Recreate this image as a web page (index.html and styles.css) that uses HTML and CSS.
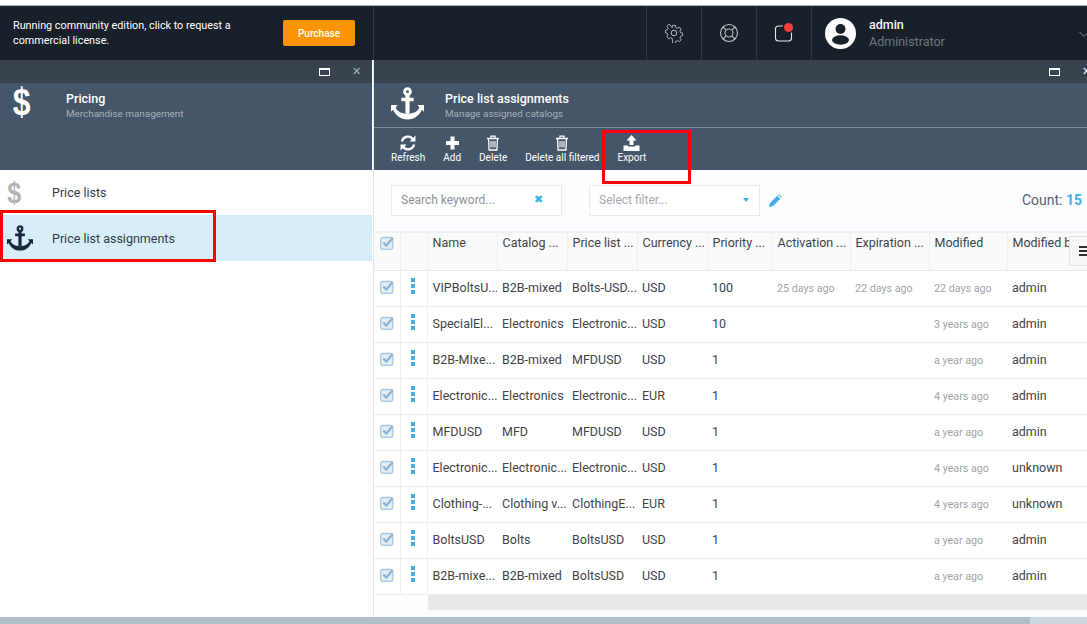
FILE: index.html
```html
<!DOCTYPE html>
<html lang="en">
<head>
    <meta charset="UTF-8">
    <title>Price list assignments</title>
    <link rel="stylesheet" href="styles.css">
</head>
<body>
    <svg class="sprites" width="0" height="0">
        <symbol id="anchor" viewBox="0 0 32 32">
            <circle cx="16" cy="4.5" r="2.8" fill="none" stroke="currentColor" stroke-width="2.8"/>
            <path d="M14 7.5h4v18.5h-4zM10 10.500h12v3.400H10z" fill="currentColor"/>
            <path d="M0 17.5l6.5 0-2 2.2C6 24 10.500 26 16 26s10-2 11.500-6.300l-2-2.200 6.500 0V24l-2-2C27.500 27.500 22.500 31.500 16 31.500S4.500 27.500 2 22l-2 2z" fill="currentColor"/>
        </symbol>
        <symbol id="trash" viewBox="0 0 14 16">
            <path d="M1 3.500h12M5 3V1.200h4V3M2.500 3.500l.6 11.500h7.800l.6-11.500" fill="none" stroke="currentColor" stroke-width="1.300"/>
            <path d="M5 6v6.500M7 6v6.500M9 6v6.500" stroke="currentColor" stroke-width="1.100"/>
        </symbol>
        <symbol id="checked" viewBox="0 0 14 14">
            <rect x=".7" y="1.500" width="12" height="11.800" rx="2" fill="#e3edf4" stroke="#a9c8dd" stroke-width="1.300"/>
            <path d="M3.300 6.500l3 3 6.500-7.500" fill="none" stroke="#8db6d2" stroke-width="2.300"/>
        </symbol>
        <symbol id="dots" viewBox="0 0 4 16">
            <path d="M0 0h4v4H0zM0 6h4v4H0zM0 12h4v4H0z" fill="#41afe6"/>
        </symbol>
    </svg>

    <header class="topbar">
        <div class="notice">
            <p>Running community edition, click to request a commercial license.</p>
            <button class="purchase">Purchase</button>
        </div>
        <div class="top-spacer"></div>
        <div class="top-btn">
            <svg width="20" height="20" viewBox="0 0 20 20" fill="none" stroke="#b9c0c8" stroke-width="1">
                <circle cx="10" cy="10" r="2.800"/>
                <path d="M8.500 1.500h3l.5 2.500 1.700.8 2.200-1.300 2 2.200-1.300 2.100.6 1.700 2.300.6v3l-2.300.6-.6 1.700 1.300 2.100-2 2.200-2.200-1.300-1.700.8-.5 2.400h-3L8 16l-1.700-.8L4.100 16.500l-2-2.200 1.300-2.100-.6-1.700-2.300-.6v-3l2.300-.6.600-1.700-1.300-2.100 2-2.200 2.200 1.300L8 4z" transform="translate(1 1) scale(.9)"/>
            </svg>
        </div>
        <div class="top-btn">
            <svg width="20" height="20" viewBox="0 0 20 20" fill="none" stroke="#b9c0c8" stroke-width="1.100">
                <circle cx="10" cy="10" r="8.500"/>
                <circle cx="10" cy="10" r="4"/>
                <path d="M4 4l3.200 3.200M16 4l-3.200 3.200M4 16l3.200-3.200M16 16l-3.200-3.200"/>
            </svg>
        </div>
        <div class="top-btn bell">
            <svg width="20" height="20" viewBox="0 0 20 20" fill="none" stroke="#e4e7ea" stroke-width="1.100">
                <rect x="1.500" y="3" width="16" height="15" rx="3"/>
            </svg>
            <span class="dot"></span>
        </div>
        <div class="user">
            <svg class="avatar" width="31" height="31" viewBox="0 0 31 31">
                <circle cx="15.500" cy="15.500" r="15.500" fill="#fff"/>
                <circle cx="15.500" cy="11" r="5" fill="#18202a"/>
                <ellipse cx="15.500" cy="22" rx="8.500" ry="4.700" fill="#18202a"/>
            </svg>
            <div class="user-text">
                <div class="user-name">admin</div>
                <div class="user-role">Administrator</div>
            </div>
            <svg class="chevron" width="10" height="6" viewBox="0 0 10 6" fill="none" stroke="#7d8792"><path d="M0 .5l5 5 5-5"/></svg>
        </div>
    </header>

    <main class="blades">
        <section class="blade blade-left">
            <div class="blade-bar">
                <span class="win-max"></span>
                <span class="win-close">✕</span>
            </div>
            <div class="blade-head head-tall">
                <span class="dollar"><span>$</span></span>
                <div>
                    <div class="blade-title">Pricing</div>
                    <div class="blade-sub">Merchandise management</div>
                </div>
            </div>
            <ul class="menu">
                <li class="menu-item">
                    <span class="menu-icon dollar-gray"><span>$</span></span>
                    Price lists
                </li>
                <li class="menu-item selected">
                    <svg class="menu-icon anchor-dark" width="26" height="26"><use href="#anchor"/></svg>
                    Price list assignments
                </li>
            </ul>
            <div class="mark mark-menu"></div>
        </section>

        <section class="blade blade-right">
            <div class="blade-bar">
                <span class="win-max"></span>
                <span class="win-close">✕</span>
            </div>
            <div class="blade-head">
                <svg class="head-anchor" width="33" height="33"><use href="#anchor"/></svg>
                <div>
                    <div class="blade-title">Price list assignments</div>
                    <div class="blade-sub">Manage assigned catalogs</div>
                </div>
            </div>
            <div class="toolbar">
                <div class="tool">
                    <svg width="16" height="16" viewBox="0 0 16 16" fill="none" stroke="#fff" stroke-width="2.400">
                        <path d="M2 6.500A6 6 0 0 1 13 4.500M14 9.500A6 6 0 0 1 3 11.500"/>
                        <path d="M15.500 .500v6h-6zM.5 15.500v-6h6z" fill="#fff" stroke="none"/>
                    </svg>
                    Refresh
                </div>
                <div class="tool">
                    <svg width="15" height="16" viewBox="0 0 15 15"><path d="M5.500 1h4v4.500H14v4H9.500V14h-4V9.500H1v-4h4.500z" fill="#fff"/></svg>
                    Add
                </div>
                <div class="tool">
                    <svg width="14" height="16"><use href="#trash"/></svg>
                    Delete
                </div>
                <div class="tool">
                    <svg width="14" height="16"><use href="#trash"/></svg>
                    Delete all filtered
                </div>
                <div class="tool">
                    <svg width="17" height="16" viewBox="0 0 17 16"><path d="M8.500 0l5 5.500h-3V10h-4V5.500h-3zM.5 10.500h4.500v1h7v-1h4.500V16H.5z" fill="#fff"/></svg>
                    Export
                </div>
                <div class="mark mark-export"></div>
            </div>

            <div class="filters">
                <div class="search">
                    <span>Search keyword...</span>
                    <span class="search-clear">✖</span>
                </div>
                <div class="select">
                    <span>Select filter...</span>
                    <span class="caret"></span>
                </div>
                <svg class="pencil" width="13" height="13" viewBox="0 0 13 13"><path d="M0 13l.8-3.800 7.500-7.500 3 3-7.500 7.500zM9.200.8L10 0l3 3-.8.800z" fill="#41afe6"/></svg>
                <div class="count">Count: <b>15</b></div>
            </div>

            <div class="grid-wrap">
                <table class="grid">
                    <colgroup>
                        <col class="c-check"><col class="c-dots"><col class="c-name"><col class="c-cat"><col class="c-list"><col class="c-cur"><col class="c-pri"><col class="c-act"><col class="c-exp"><col class="c-mod"><col class="c-by">
                    </colgroup>
                    <thead>
                        <tr>
                            <th class="cell-check"><svg width="14" height="14"><use href="#checked"/></svg></th>
                            <th></th>
                            <th>Name</th><th>Catalog ...</th><th>Price list ...</th><th>Currency ...</th><th>Priority ...</th><th>Activation ...</th><th>Expiration ...</th><th>Modified</th><th>Modified b</th>
                        </tr>
                    </thead>
                    <tbody id="rows"></tbody>
                </table>
                <div class="scroll-row"><div class="scroll-track"></div></div>
                <div class="grid-menu"><span></span></div>
            </div>
        </section>
    </main>
    <footer class="bottom-scroll"><div class="bottom-end"></div></footer>

    <script>
        const rows = [
            ['VIPBoltsU...', 'B2B-mixed', 'Bolts-USD...', 'USD', '100', '25 days ago', '22 days ago', '22 days ago', 'admin'],
            ['SpecialEl...', 'Electronics', 'Electronic...', 'USD', '10', '', '', '3 years ago', 'admin'],
            ['B2B-MIxe...', 'B2B-mixed', 'MFDUSD', 'USD', '1', '', '', 'a year ago', 'admin'],
            ['Electronic...', 'Electronics', 'Electronic...', 'EUR', '1', '', '', '4 years ago', 'admin'],
            ['MFDUSD', 'MFD', 'MFDUSD', 'USD', '1', '', '', 'a year ago', 'admin'],
            ['Electronic...', 'Electronic...', 'Electronic...', 'USD', '1', '', '', '4 years ago', 'unknown'],
            ['Clothing-...', 'Clothing v...', 'ClothingE...', 'EUR', '1', '', '', '4 years ago', 'unknown'],
            ['BoltsUSD', 'Bolts', 'BoltsUSD', 'USD', '1', '', '', 'a year ago', 'admin'],
            ['B2B-mixe...', 'B2B-mixed', 'BoltsUSD', 'USD', '1', '', '', 'a year ago', 'admin']
        ];

        document.getElementById('rows').innerHTML = rows.map(r => `
            <tr>
                <td class="cell-check"><svg width="14" height="14"><use href="#checked"/></svg></td>
                <td class="cell-dots"><svg width="4" height="16"><use href="#dots"/></svg></td>
                ${r.map((v, i) => `<td class="${i >= 5 && i <= 7 ? 'date' : ''}">${v}</td>`).join('')}
            </tr>
        `).join('');
    </script>
</body>
</html>
```

FILE: styles.css
```css
* {
    box-sizing: border-box;
}
html, body {
    height: 100%;
}
body {
    margin: 0;
    padding-top: 5px;
    font-family: Roboto, "Liberation Sans", sans-serif;
    background: #fff;
    color: #333;
    overflow: hidden;
    display: flex;
    flex-direction: column;
}
.sprites {
    position: absolute;
}

/* top bar */
.topbar {
    height: 55px;
    flex: none;
    display: flex;
    background: #18202a;
    border-top: 1px solid #b4b8bc;
}
.notice {
    width: 374px;
    flex: none;
    display: flex;
    align-items: center;
    justify-content: space-between;
    padding: 0 18px 0 13px;
    border-right: 1px solid #2d3947;
    color: #fff;
    font-size: 10.800px;
    line-height: 15px;
}
.notice p {
    margin: 0;
    width: 230px;
}
.purchase {
    width: 72px;
    height: 26px;
    border: none;
    border-radius: 2px;
    background: #fb9404;
    color: #fff;
    font-family: inherit;
    font-size: 10px;
    font-weight: 500;
}
.top-spacer {
    width: 272px;
    flex: none;
}
.top-btn {
    width: 55px;
    flex: none;
    position: relative;
    display: flex;
    align-items: center;
    justify-content: center;
    border-left: 1px solid #2d3947;
}
.bell .dot {
    position: absolute;
    top: 17px;
    left: 27px;
    width: 9px;
    height: 9px;
    border-radius: 50%;
    background: #f63e3e;
    box-shadow: 0 0 0 1.500px #18202a;
}
.user {
    flex: 1;
    display: flex;
    align-items: center;
    padding-left: 13px;
    border-left: 1px solid #2d3947;
    position: relative;
}
.user-text {
    margin-left: 13px;
}
.user-name {
    color: #f4f5f6;
    font-size: 12.500px;
    font-weight: 500;
    line-height: 17px;
}
.user-role {
    color: #6f7882;
    font-size: 12.500px;
    line-height: 17px;
}
.chevron {
    position: absolute;
    right: -2px;
    top: 25px;
}

/* blades */
.blades {
    flex: 1;
    display: flex;
    min-height: 0;
}
.blade {
    position: relative;
    display: flex;
    flex-direction: column;
    background: #fff;
}
.blade-left {
    width: 372px;
    flex: none;
}
.blade-right {
    flex: 1;
    min-width: 0;
    margin-left: 1px;
    border-left: 1px solid #e3e8ee;
    background: #fcfdfe;
}
.blade-bar {
    height: 23px;
    flex: none;
    display: flex;
    align-items: center;
    justify-content: flex-end;
    background: #38434f;
    color: #aeb5bc;
    padding-right: 11px;
}
.blade-right .blade-bar {
    padding-right: 0;
    margin-right: -4px;
}
.win-max {
    width: 11px;
    height: 8px;
    border: 1px solid #fff;
    border-top-width: 2px;
    margin-right: 22px;
}
.win-close {
    font-size: 11px;
    line-height: 11px;
}
.blade-right .win-close {
    color: #fff;
}
.blade-head {
    height: 44px;
    flex: none;
    display: flex;
    background: #46566a;
    padding-top: 8px;
}
.head-tall {
    height: 87px;
}
.dollar {
    width: 66px;
    padding-left: 11px;
    margin-top: -4px;
    flex: none;
    color: #fff;
    font-family: "Liberation Sans", sans-serif;
    font-size: 38px;
    font-weight: 700;
    line-height: 30px;
}
.dollar span, .dollar-gray span {
    display: inline-block;
    transform: scaleX(.84);
}
.head-anchor {
    color: #fff;
    margin: -4px 21px 0 17px;
    flex: none;
}
.blade-title {
    color: #fff;
    font-size: 12.500px;
    font-weight: 500;
    line-height: 15px;
}
.blade-sub {
    color: #a6afb9;
    font-size: 9.900px;
    line-height: 16px;
}

/* left menu */
.menu {
    list-style: none;
    margin: 0;
    padding: 0;
}
.menu-item {
    height: 45px;
    display: flex;
    align-items: center;
    font-size: 12.500px;
    color: #333c46;
}
.menu-item.selected {
    height: 46px;
    background: #d7edf9;
}
.menu-icon {
    width: 52px;
    flex: none;
}
.dollar-gray {
    padding-left: 6px;
    font-family: "Liberation Sans", sans-serif;
    font-size: 30px;
    font-weight: 700;
    color: #b3b3b3;
}
.anchor-dark {
    color: #18293b;
    width: 26px;
    margin: 0 19px 0 7px;
}

/* red annotation boxes */
.mark {
    position: absolute;
    border: 3px solid #f00;
    pointer-events: none;
}
.mark-menu {
    left: 0;
    top: 150px;
    width: 216px;
    height: 52px;
}
.mark-export {
    left: 228px;
    top: 2px;
    width: 89px;
    height: 54px;
}

/* toolbar */
.toolbar {
    height: 43px;
    flex: none;
    position: relative;
    display: flex;
    align-items: flex-start;
    padding: 7px 0 0 17px;
    gap: 18px;
    background: #46566a;
    border-top: 1px solid #7d8a99;
}
.tool {
    display: flex;
    flex-direction: column;
    align-items: center;
    gap: 1px;
    color: #fff;
    font-size: 10px;
    line-height: 12px;
    white-space: nowrap;
}
.tool svg {
    color: #fff;
}

/* filters */
.filters {
    height: 61px;
    flex: none;
    display: flex;
    align-items: flex-start;
    padding: 15px 5px 0 17px;
    font-size: 12px;
    color: #8b929a;
}
.search, .select {
    height: 31px;
    display: flex;
    align-items: center;
    justify-content: space-between;
    background: #fff;
    border: 1px solid #e6ebf0;
    padding-bottom: 2px;
}
.search {
    width: 171px;
    padding-left: 9px;
    padding-right: 18px;
}
.search-clear {
    color: #41afe6;
    font-size: 11px;
}
.select {
    width: 171px;
    margin-left: 27px;
    padding-left: 9px;
    padding-right: 10px;
    color: #a3a9af;
}
.caret {
    border-left: 3.500px solid transparent;
    border-right: 3.500px solid transparent;
    border-top: 4px solid #41afe6;
}
.pencil {
    margin: 9px 0 0 9px;
}
.count {
    margin-left: auto;
    padding-top: 7px;
    font-size: 14px;
    color: #5a6068;
}
.count b {
    color: #41afe6;
    font-weight: 700;
}

/* grid */
.grid-wrap {
    flex: 1;
    position: relative;
    overflow: hidden;
    border-top: 2px solid #edf0f4;
}
.grid {
    table-layout: fixed;
    width: 713px;
    border-collapse: collapse;
    font-size: 12.500px;
    color: #3f444a;
}
.c-check { width: 26px; }
.c-dots { width: 27px; }
.c-name { width: 70px; }
.c-cat, .c-list, .c-cur { width: 70px; }
.c-pri { width: 65px; }
.c-act { width: 78px; }
.c-exp { width: 79px; }
.c-mod { width: 78px; }
.c-by { width: 80px; }
.grid th {
    height: 37px;
    padding: 0 0 18px 5px;
    background: #fafafa;
    border-right: 1px solid #edf0f4;
    border-bottom: 1px solid #e3e8ee;
    text-align: left;
    font-weight: 400;
    white-space: nowrap;
    overflow: hidden;
}
.grid td {
    height: 36px;
    padding: 0 0 2px 5px;
    background: #fff;
    border-bottom: 1px solid #e9edf1;
    white-space: nowrap;
    overflow: hidden;
}
.grid td:last-child {
    border-right: 1px solid #c5d0d9;
}
.grid td.cell-check, .grid th.cell-check {
    padding: 0 0 0 6px;
    border-right: 1px solid #edf0f4;
}
.grid th.cell-check {
    padding-bottom: 14px;
}
.grid td.cell-dots {
    padding: 0 0 1px 10px;
    border-right: 1px solid #edf0f4;
}
.grid td.date {
    padding-bottom: 0;
    font-size: 10.700px;
    color: #a0a4a9;
}
.scroll-row {
    padding-left: 54px;
}
.scroll-track {
    height: 15px;
    background: #e8e8e8;
}
.grid-menu {
    position: absolute;
    right: -6px;
    top: 3px;
    width: 24px;
    height: 30px;
    background: #f7f7f7;
    border: 1px solid #e3e3e3;
    padding: 9px 3px 0 9px;
}
.grid-menu span {
    display: block;
    height: 10px;
    border-top: 2px solid #333;
    border-bottom: 2px solid #333;
    position: relative;
}
.grid-menu span::after {
    content: "";
    position: absolute;
    left: 0;
    right: 0;
    top: 2px;
    height: 2px;
    background: #333;
}

.bottom-scroll {
    height: 7px;
    flex: none;
    background: #b0bec7;
    display: flex;
    justify-content: flex-end;
}
.bottom-end {
    width: 57px;
    background: #cbd6de;
}
```
